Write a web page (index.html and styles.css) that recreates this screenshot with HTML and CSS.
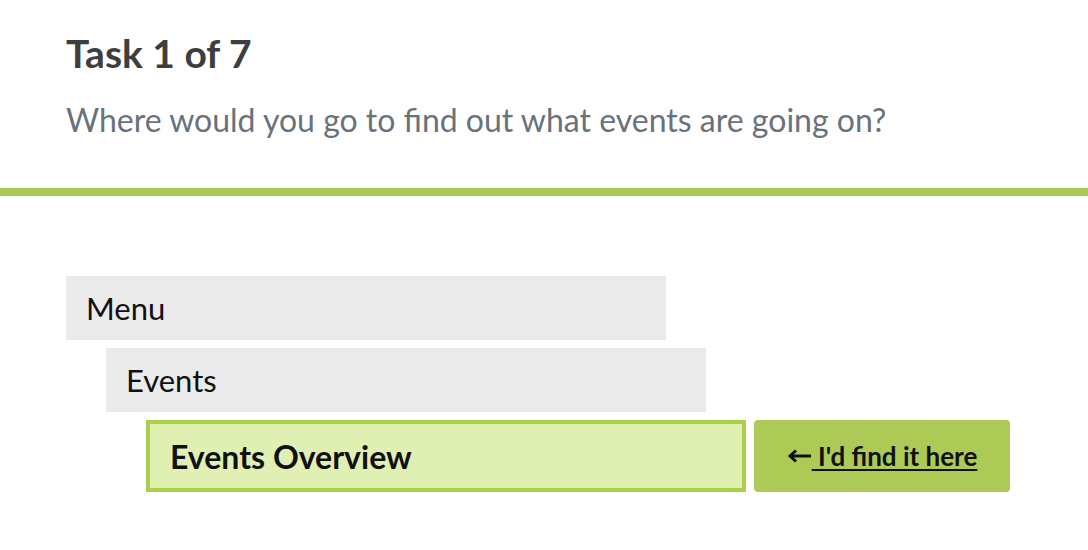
FILE: index.html
```html
<!DOCTYPE html>
<html lang="en">
<head>
    <meta charset="UTF-8">
    <meta name="viewport" content="width=device-width, initial-scale=1.0">
    <title>Tree test - Task 1 of 7</title>
    <link rel="stylesheet" href="styles.css">
</head>
<body>
    <header class="task">
        <h1 class="task-title">Task 1 of 7</h1>
        <p class="task-question">Where would you go to find out what events are going on?</p>
    </header>

    <main class="tree">
        <!-- level 0 -->
        <div class="tree-row">
            <div class="node">Menu</div>
        </div>

        <!-- level 1 -->
        <div class="tree-row level-1">
            <div class="node">Events</div>
        </div>

        <!-- level 2 (selected) -->
        <div class="tree-row level-2">
            <div class="node node-selected">Events Overview</div>
            <button type="button" class="choose-btn">
                <svg class="arrow" width="24" height="14" viewBox="0 0 24 14">
                    <path d="M24 7H4M9 1.5L3 7l6 5.5" fill="none" stroke="#111" stroke-width="3"/>
                </svg>
                <span class="choose-label">&nbsp;I'd find it here</span>
            </button>
        </div>
    </main>
</body>
</html>
```

FILE: styles.css
```css
body {
    margin: 0;
    background: #fff;
    font-family: Lato, "Liberation Sans", sans-serif;
}
.task {
    height: 196px;
    padding: 27px 66px 0;
    box-sizing: border-box;
    border-bottom: 8px solid #abc955;
}
.task-title {
    margin: 0;
    font-size: 39px;
    line-height: 52px;
    font-weight: 700;
    color: #3e3e3e;
}
.task-question {
    margin: 21px 0 0;
    font-size: 32px;
    line-height: 40px;
    color: #69727b;
}
.tree {
    padding: 80px 0 0 66px;
    display: flex;
    flex-direction: column;
    gap: 8px;
}
.tree-row {
    display: flex;
    gap: 8px;
}
.level-1 {
    margin-left: 40px;
}
.level-2 {
    margin-left: 80px;
}
.node {
    width: 600px;
    height: 64px;
    padding: 0 20px;
    box-sizing: border-box;
    display: flex;
    align-items: center;
    background: #ebebeb;
    font-size: 31px;
    color: #111;
}
.node-selected {
    height: 72px;
    padding: 0 20px;
    background: #e0f0b3;
    border: 4px solid #abcf4b;
    font-size: 32px;
    font-weight: 700;
}
.choose-btn {
    width: 256px;
    height: 72px;
    display: flex;
    align-items: center;
    justify-content: center;
    gap: 1px;
    border: none;
    border-radius: 4px;
    background: #adc956;
    color: #111;
    font-family: inherit;
    font-size: 26px;
    font-weight: 700;
    cursor: pointer;
}
.arrow {
    flex: none;
}
.choose-label {
    text-decoration: underline;
    text-underline-offset: 3px;
}
```
